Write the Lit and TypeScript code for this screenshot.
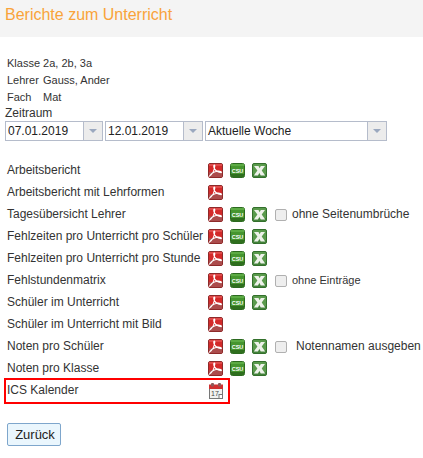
import { LitElement, html, css } from "lit";
import { customElement } from "lit/decorators.js";

const pdf = html`<svg class="ic" width="15" height="15" viewBox="0 0 15 15"><rect x=".5" y=".5" width="14" height="14" rx="1.500" fill="#d32a2a" stroke="#8e2a2a"/><rect x="1" y="1" width="13" height="2" fill="#e04a4a"/><rect x="1" y="9" width="13" height="5" fill="#ab4c4c"/><path d="M1.800 12.800C4 11.500 6.300 7 6.800 3.200 7 1.300 5.300 1.600 5.800 4 6.400 6.500 9 9 13.200 9.600 14.200 8.900 12 7.700 9.500 8.100 7 8.500 3.300 10.200 1.800 12.800Z" fill="none" stroke="#fff" stroke-width="1.100"/></svg>`;
const csu = html`<svg class="ic" width="15" height="15" viewBox="0 0 15 15"><rect x=".5" y=".5" width="14" height="14" rx="2" fill="#46962f" stroke="#2c6a20"/><rect x="1" y="1" width="13" height="2" fill="#5cab44"/><rect x="1" y="11" width="13" height="3" fill="#2f6f1e"/><text x="7.500" y="10" text-anchor="middle" class="csu">CSU</text></svg>`;
const xls = html`<svg class="ic" width="15" height="15" viewBox="0 0 15 15"><rect x=".5" y=".5" width="14" height="14" rx="1.500" fill="#5a9a4c" stroke="#33702c"/><rect x="1" y="11" width="13" height="3" fill="#43823a"/><path d="M2 3H6.500L7.600 5.300 8.800 3H13L9.700 7.500 13.200 12.500H8.700L7.400 9.700 6 12.500H1.800L5.400 7.500Z" fill="#eef2ea"/></svg>`;
const cal = html`<svg class="ic" width="14" height="16" viewBox="0 0 14 16"><rect x=".5" y="3" width="13" height="12.500" fill="#f2f2f0" stroke="#777"/><rect x="0" y="1.500" width="14" height="4.500" fill="#d03030"/><rect x="2" y="0" width="3" height="3.500" rx="1" fill="#8c5a5a"/><rect x="9" y="0" width="3" height="3.500" rx="1" fill="#8c5a5a"/><text x="6" y="13" text-anchor="middle" class="num">17</text><rect x="10" y="11.500" width="3.500" height="4" fill="#fff" stroke="#777"/></svg>`;

const arrow = html`<span class="arrow"><i></i></span>`;

interface Row { label: string; icons: unknown[]; check?: string; kind?: string; }
const rows: Row[] = [
  { label: "Arbeitsbericht", icons: [pdf, csu, xls] },
  { label: "Arbeitsbericht mit Lehrformen", icons: [pdf] },
  { label: "Tagesübersicht Lehrer", icons: [pdf, csu, xls], check: "ohne Seitenumbrüche" },
  { label: "Fehlzeiten pro Unterricht pro Schüler", icons: [pdf, csu, xls] },
  { label: "Fehlzeiten pro Unterricht pro Stunde", icons: [pdf, csu, xls] },
  { label: "Fehlstundenmatrix", icons: [pdf, csu, xls], check: "ohne Einträge", kind: "small" },
  { label: "Schüler im Unterricht", icons: [pdf, csu, xls] },
  { label: "Schüler im Unterricht mit Bild", icons: [pdf] },
  { label: "Noten pro Schüler", icons: [pdf, csu, xls], check: "Notennamen ausgeben", kind: "wide" },
  { label: "Noten pro Klasse", icons: [pdf, csu, xls] },
];

@customElement("app-root")
export class AppRoot extends LitElement {
  static styles = css`
    :host { display: block; width: 423px; height: 458px; overflow: hidden; background: #fff; color: #333; font-family: "Liberation Sans", Arial, sans-serif; font-size: 12px; }
    .head { height: 37px; background: #f4f4f4; padding: 5px 5px 0; box-sizing: border-box; color: #f9a33a; font-size: 16px; line-height: 20px; }
    .info { padding: 18px 0 0 7px; font-size: 11px; line-height: 17px; }
    .info div { display: flex; }
    .info b { font-weight: normal; width: 36px; }
    .zeit { padding-left: 5px; font-size: 12px; line-height: 14px; height: 14px; }
    .fields { display: flex; gap: 2px; padding-left: 5px; margin-top: 1px; }
    .field { display: flex; height: 20px; width: 98px; box-sizing: border-box; border: 1px solid #b5bccb; align-items: stretch; color: #222; font-size: 12px; line-height: 18px; }
    .field.big { width: 182px; }
    .field span.v { flex: 1; padding-left: 2px; white-space: nowrap; }
    .arrow { width: 18px; border-left: 1px solid #b5bccb; display: flex; align-items: center; justify-content: center; background: #ececec; }
    .arrow i { width: 0; height: 0; border: 4px solid transparent; border-top: 4px solid #9aa8bf; border-bottom: 0; }
    .list { margin-top: 18px; padding-left: 7px; }
    .row { display: flex; height: 22px; align-items: center; }
    .row .label { width: 201px; white-space: nowrap; line-height: 14px; margin-top: -1px; }
    .icons { display: flex; gap: 7px; margin-top: 1px; }
    .ic { display: block; }
    .csu { font: bold 5.500px "Liberation Sans", sans-serif; fill: #fff; }
    .num { font: 7px "Liberation Sans", sans-serif; fill: #444; }
    .cb { width: 10px; height: 10px; margin: 1px 0 0 8px; border: 1px solid #b0b0b0; border-radius: 2px; background: #eeeeee; flex: none; }
    .chk { margin-left: 5px; font-size: 12px; white-space: nowrap; margin-top: -1px; }
    .chk.small { font-size: 11px; }
    .chk.wide { margin-left: 9px; }
    .ics { margin: -1px 0 0 4px; width: 226px; height: 26px; box-sizing: border-box; border: 2px solid #f00; display: flex; padding-left: 1px; }
    .ics .label { width: 202px; line-height: 14px; padding-top: 3px; white-space: nowrap; }
    .ics .ic { margin-top: 3px; }
    .back { display: block; margin: 19px 0 0 7px; width: 54px; height: 23px; box-sizing: border-box; border: 1px solid #7ea6cc; border-radius: 2px; background: #eaf6fd; color: #222; font: 13px/20px "Liberation Sans", Arial, sans-serif; padding: 0 0 0 2px; text-align: center; }
  `;

  render() {
    return html`
      <div class="head">Berichte zum Unterricht</div>
      <div class="info">
        <div>Klasse 2a, 2b, 3a</div>
        <div><b>Lehrer</b>Gauss, Ander</div>
        <div><b>Fach</b>Mat</div>
      </div>
      <div class="zeit">Zeitraum</div>
      <div class="fields">
        <div class="field"><span class="v">07.01.2019</span>${arrow}</div>
        <div class="field"><span class="v">12.01.2019</span>${arrow}</div>
        <div class="field big"><span class="v">Aktuelle Woche</span>${arrow}</div>
      </div>
      <div class="list">
        ${rows.map(
          (r) => html`<div class="row">
            <span class="label">${r.label}</span>
            <span class="icons">${r.icons}</span>
            ${r.check ? html`<span class="cb"></span><span class="chk ${r.kind ?? ""}">${r.check}</span>` : ""}
          </div>`
        )}
      </div>
      <div class="ics"><span class="label">ICS Kalender</span>${cal}</div>
      <button class="back">Zurück</button>
    `;
  }
}
